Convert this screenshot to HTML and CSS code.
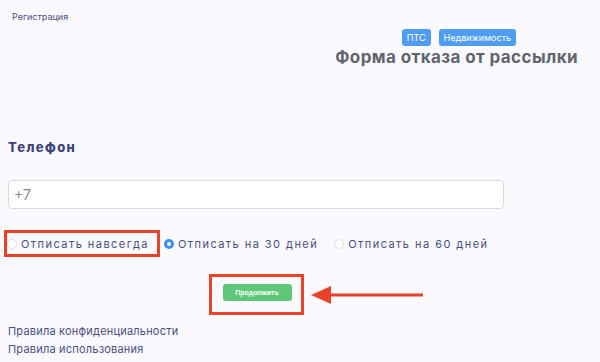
FILE: index.html
```html
<!DOCTYPE html>
<html lang="ru">
<head>
  <meta charset="UTF-8">
  <title>Форма отказа от рассылки</title>
  <link rel="stylesheet" href="styles.css">
</head>
<body>
  <div class="top">
    <a class="reg" href="#">Регистрация</a>
    <div class="head">
      <div class="tags">
        <span class="tag">ПТС</span>
        <span class="tag">Недвижимость</span>
      </div>
      <h1 class="title">Форма отказа от рассылки</h1>
    </div>
  </div>

  <div class="form">
    <div class="label">Телефон</div>
    <input class="phone" type="text" value="+7">

    <div class="options">
      <label class="opt marked"><span class="radio"></span>Отписать навсегда</label>
      <label class="opt"><span class="radio on"></span>Отписать на 30 дней</label>
      <label class="opt third"><span class="radio"></span>Отписать на 60 дней</label>
    </div>

    <div class="submit-row">
      <div class="submit-box">
        <button class="submit">Продолжить</button>
        <svg class="arrow" width="114" height="20" viewBox="0 0 114 20">
          <path d="M19 10 H112" stroke="#e8422b" stroke-width="3" fill="none"/>
          <path d="M0 10 L20 1 L20 19 Z" fill="#e8422b"/>
        </svg>
      </div>
    </div>

    <div class="links">
      <a href="#">Правила конфиденциальности</a>
      <a href="#">Правила использования</a>
    </div>
  </div>
</body>
</html>
```

FILE: styles.css
```css
body {
  margin: 0;
  font-family: Inter, 'Noto Sans', sans-serif;
  background-color: #f9f9fe;
  color: #4b4f80;
}

.top {
  display: flex;
  justify-content: space-between;
  padding: 11px 22px 0 12px;
}

.reg {
  font-size: 9px;
  line-height: 12px;
  color: #4b4f80;
  text-decoration: none;
}

.head {
  display: flex;
  flex-direction: column;
  align-items: flex-end;
}

.tags {
  display: flex;
  gap: 8px;
  margin-top: 18px;
  margin-right: 62px;
}

.tag {
  background-color: #4f9cf2;
  color: #fff;
  font-size: 9px;
  line-height: 17px;
  padding: 0 5px;
  border-radius: 3px;
}

.title {
  margin: 1px 0 0;
  font-size: 17px;
  line-height: 20px;
  font-weight: 700;
  letter-spacing: 0.4px;
  color: #62656f;
}

.form {
  width: 496px;
  padding: 0 8px;
}

.label {
  margin-top: 72px;
  font-size: 13px;
  line-height: 16px;
  font-weight: 800;
  letter-spacing: 1.4px;
  color: #3d4377;
}

.phone {
  display: block;
  box-sizing: border-box;
  width: 100%;
  height: 29px;
  margin-top: 25px;
  padding: 0 5px;
  border: 1px solid #d9d9df;
  border-radius: 4px;
  background: #fff;
  font-family: Inter, sans-serif;
  font-size: 14px;
  color: #888;
  outline: none;
}

.options {
  display: flex;
  align-items: center;
  margin-top: 21px;
  margin-left: -4px;
}

.opt {
  display: flex;
  align-items: center;
  font-size: 11px;
  line-height: 16px;
  letter-spacing: 1.45px;
  color: #4b4f80;
}

.opt.marked {
  border: 3px solid #e8422b;
  padding: 2.5px 8px 2.5px 0;
  margin-right: 4px;
}

.opt.third {
  margin-left: 16px;
}

.radio {
  box-sizing: border-box;
  width: 10px;
  height: 10px;
  margin-right: 4px;
  border: 1px solid #dcdce2;
  border-radius: 50%;
  background: #fff;
}

.radio.on {
  border: 3px solid #3d8ef0;
}

.submit-row {
  display: flex;
  justify-content: center;
  margin-top: 17px;
}

.submit-box {
  position: relative;
  border: 3px solid #e8422b;
  padding: 7px 9px 11px 11px;
}

.submit {
  display: block;
  width: 69px;
  height: 17px;
  padding: 0;
  border: none;
  border-radius: 3px;
  background-color: #5ec77a;
  color: #fff;
  font-family: 'Liberation Sans', sans-serif;
  font-size: 7px;
  font-weight: 700;
}

.arrow {
  position: absolute;
  left: 100%;
  top: 8px;
  margin-left: 10px;
}

.links {
  margin-top: 7px;
}

.links a {
  display: block;
  font-size: 11px;
  line-height: 18px;
  letter-spacing: 0.2px;
  color: #4b4f80;
  text-decoration: none;
}
```
